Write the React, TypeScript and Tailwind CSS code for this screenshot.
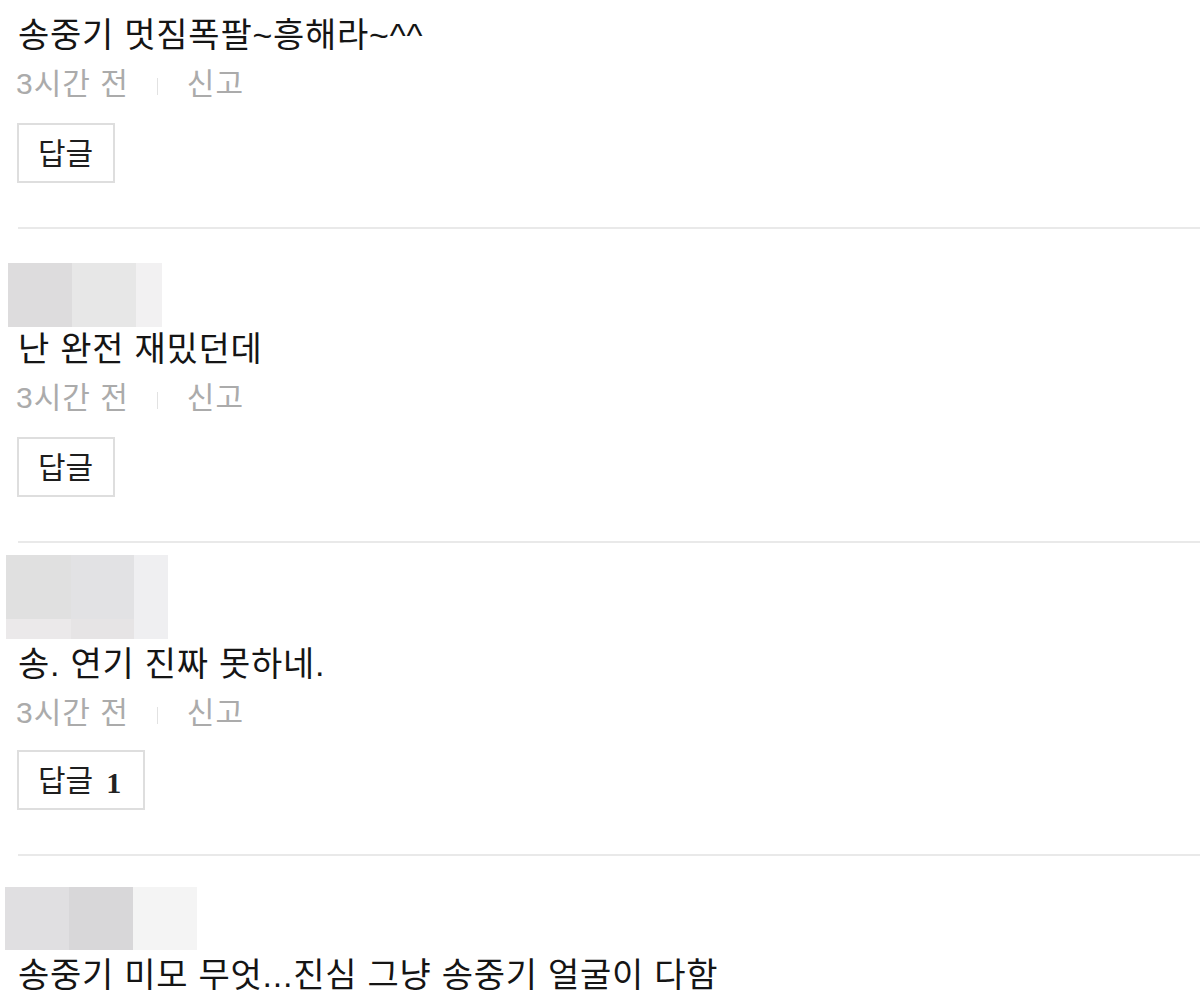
import React from "react";

type Block = { w: number; c: string; lower?: string };

const FONT = "font-['Liberation_Sans','Noto_Sans_CJK_KR',sans-serif]";

function Avatar({ blocks, h, ml, lowerH }: { blocks: Block[]; h: number; ml: number; lowerH?: number }) {
  return (
    <div className="flex" style={{ height: h, marginLeft: ml }}>
      {blocks.map((b, i) => (
        <div key={i} className="flex flex-col" style={{ width: b.w }}>
          <div className="flex-1" style={{ backgroundColor: b.c }} />
          {b.lower && lowerH ? <div style={{ height: lowerH, backgroundColor: b.lower }} /> : null}
        </div>
      ))}
    </div>
  );
}

function Meta() {
  return (
    <div className={`flex items-center text-[30px] leading-[34px] tracking-[1px] text-[#ababab] -ml-[2px] ${FONT}`}>
      <span>3시간 전</span>
      <span className="ml-[28px] mr-[29px] inline-block w-[1px] h-[17px] bg-[#e2e2e2] mt-[4px]" />
      <span>신고</span>
    </div>
  );
}

function ReplyButton({ count }: { count?: number }) {
  return (
    <div className="flex">
      <div
        className={`-ml-[1px] flex h-[60px] items-center border-2 border-[#dedede] bg-white pl-[19px] text-[30px] text-[#1e1e1e] ${FONT} ${
          count !== undefined ? "pr-[22px]" : "pr-[20px]"
        }`}
      >
        <span>답글</span>
        {count !== undefined && (
          <span className="ml-[13px] mt-[4px] font-['Liberation_Serif',serif] font-bold text-[30px] text-[#222]">{count}</span>
        )}
      </div>
    </div>
  );
}

function Text({ children }: { children: React.ReactNode }) {
  return (
    <div className={`text-[34px] leading-[36px] tracking-[0.75px] text-[#151515] whitespace-nowrap ${FONT}`}>
      {children}
    </div>
  );
}

export default function App() {
  return (
    <div className="h-[1007px] w-[1200px] overflow-hidden bg-white">
      {/* Item 1 */}
      <div className="ml-[18px] border-b-2 border-[#e9e9e9] pt-[17px] pb-[44px]">
        <Text>송중기 멋짐폭팔~흥해라~^^</Text>
        <div className="mt-[14px]">
          <Meta />
        </div>
        <div className="mt-[22px]">
          <ReplyButton />
        </div>
      </div>

      {/* Item 2 */}
      <div className="ml-[18px] border-b-2 border-[#e9e9e9] pt-[34px] pb-[44px]">
        <Avatar
          h={64}
          ml={-10}
          blocks={[
            { w: 64, c: "#dddcdd" },
            { w: 64, c: "#e7e7e7" },
            { w: 26, c: "#f2f1f2" },
          ]}
        />
        <div className="mt-[4px]">
          <Text>난 완전 재밌던데</Text>
        </div>
        <div className="mt-[14px]">
          <Meta />
        </div>
        <div className="mt-[22px]">
          <ReplyButton />
        </div>
      </div>

      {/* Item 3 */}
      <div className="ml-[18px] border-b-2 border-[#e9e9e9] pt-[12px] pb-[44px]">
        <Avatar
          h={84}
          ml={-12}
          lowerH={20}
          blocks={[
            { w: 65, c: "#e0e0e0", lower: "#ebe9ea" },
            { w: 63, c: "#e2e2e4", lower: "#e6e4e5" },
            { w: 34, c: "#efeff1", lower: "#efeff1" },
          ]}
        />
        <div className="mt-[7px]">
          <Text>송. 연기 진짜 못하네.</Text>
        </div>
        <div className="mt-[14px]">
          <Meta />
        </div>
        <div className="mt-[20px]">
          <ReplyButton count={1} />
        </div>
      </div>

      {/* Item 4 */}
      <div className="ml-[18px] pt-[31px]">
        <Avatar
          h={63}
          ml={-13}
          blocks={[
            { w: 64, c: "#e0dfe1" },
            { w: 64, c: "#d8d7d9" },
            { w: 64, c: "#f4f4f4" },
          ]}
        />
        <div className="mt-[7px]">
          <Text>송중기 미모 무엇...진심 그냥 송중기 얼굴이 다함</Text>
        </div>
      </div>
    </div>
  );
}
